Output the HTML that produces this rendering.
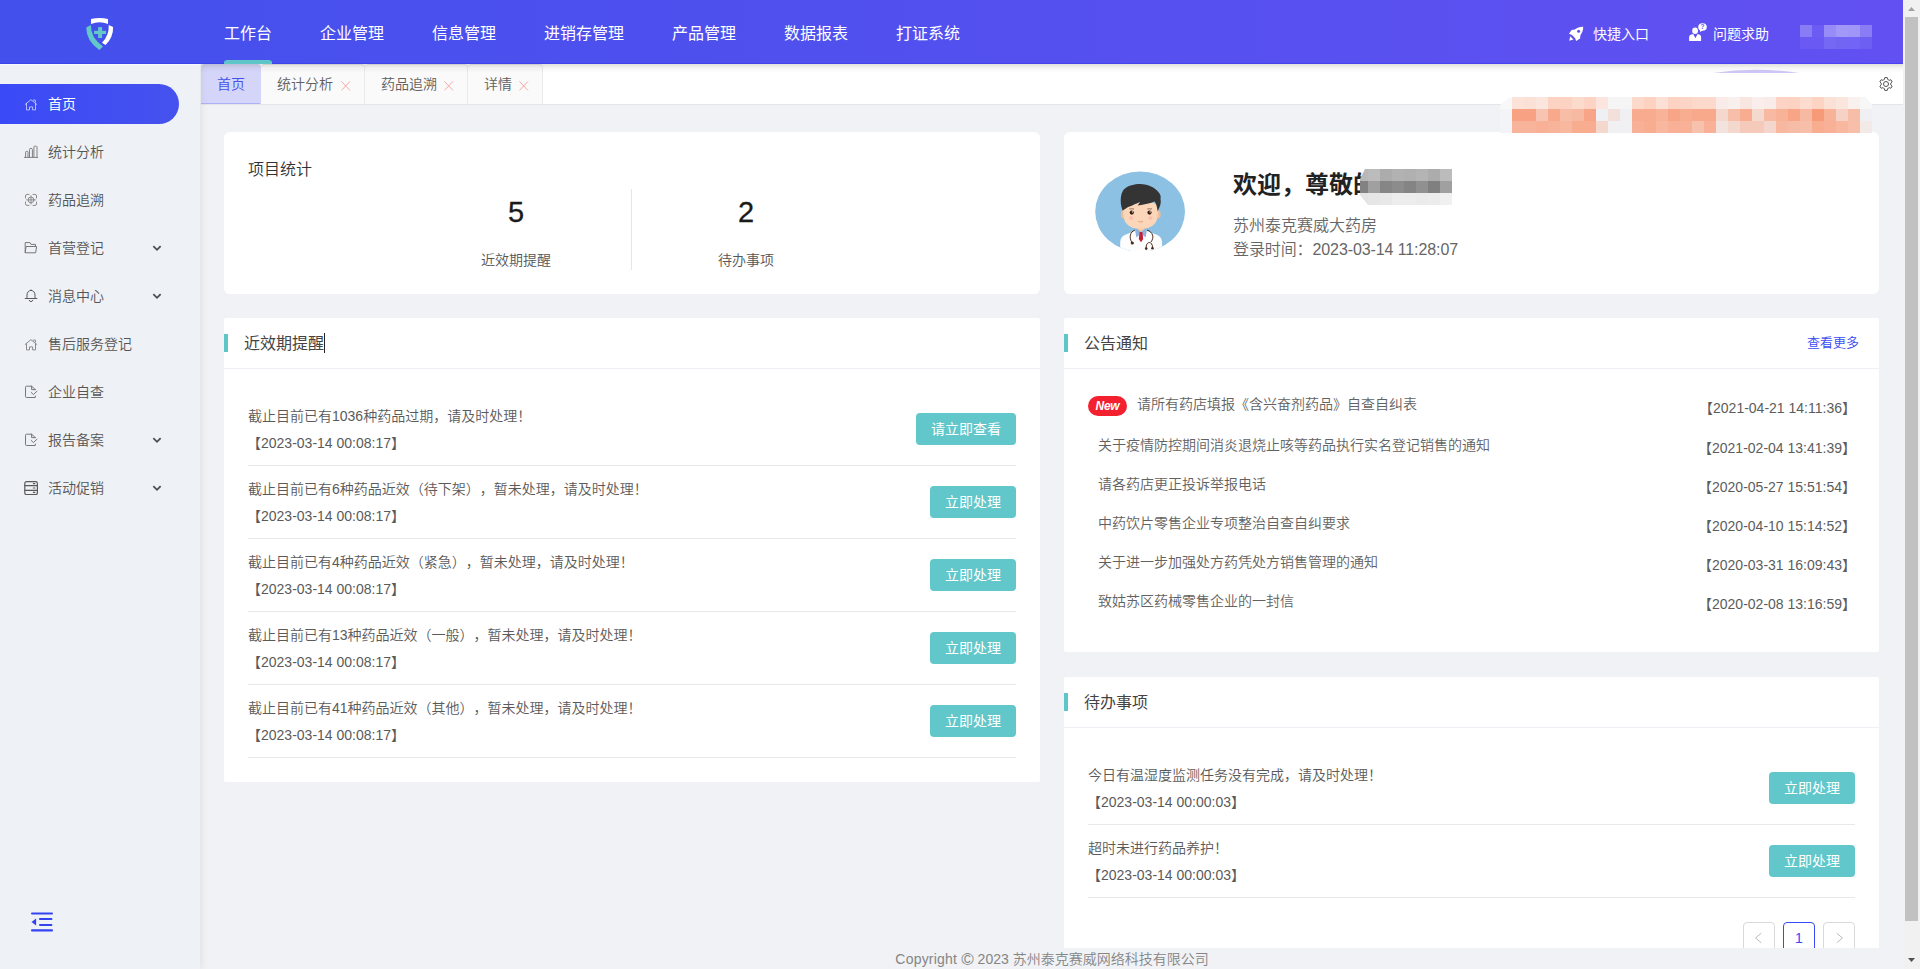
<!DOCTYPE html>
<html lang="zh-CN">
<head>
<meta charset="utf-8">
<title>工作台</title>
<style>
*{box-sizing:border-box;margin:0;padding:0}
html,body{width:1920px;height:969px;overflow:hidden}
body{text-spacing-trim:space-all;font-weight:350;font-family:"Liberation Sans","Noto Sans CJK SC",sans-serif;font-size:14px;color:#555;background:#f0f2f5;position:relative}
.abs{position:absolute}
i.m{position:absolute;width:12px;height:12px;display:block}
/* header */
#hd{position:absolute;left:0;top:0;width:1903px;height:64px;background:linear-gradient(90deg,#4350ec 0%,#4f50ee 40%,#6250f2 100%);box-shadow:inset 0 -1px 0 rgba(56,56,236,.55);z-index:20}
#hd .nav{font-weight:400;position:absolute;top:2px;height:64px;line-height:64px;font-size:16px;color:#fff;white-space:nowrap}
#hd .ul{position:absolute;left:224px;top:60px;width:48px;height:4px;border-radius:3px 3px 0 0;background:#5ec6c8}
#hd .rt{font-weight:400;position:absolute;top:0;height:64px;line-height:69px;font-size:14px;color:#fff;white-space:nowrap}
/* sidebar */
#sb{position:absolute;left:0;top:64px;width:200px;height:905px;background:#eef1f6;box-shadow:2px 0 6px rgba(120,130,150,.13),inset 0 1px 0 #f8f9fb;z-index:10}
#sb .it{position:absolute;left:0;width:200px;height:40px;line-height:40px;font-size:14px;color:#555}
#sb .it span{position:absolute;left:48px;top:0}
#sb .it svg.ic{position:absolute;left:24px;top:13px;width:14px;height:14px}
#sb .it svg.ch{position:absolute;left:151px;top:15px;width:12px;height:12px}
#sb .act{font-weight:400;background:linear-gradient(90deg,#3a4af6,#4652ee);color:#fff;width:179px;border-radius:0 20px 20px 0}
/* tabs */
#tabs{position:absolute;left:201px;top:64px;width:1702px;height:41px;background:#fff;border-bottom:1px solid #e3e5ea;z-index:5}
#tabs:before{content:"";position:absolute;left:0;top:0;right:0;height:9px;background:linear-gradient(rgba(70,70,60,.17),rgba(90,90,90,.06) 45%,rgba(255,255,255,0));z-index:3}
#tabs .tb{position:absolute;top:0;height:40px;line-height:39px;font-size:14px;color:#606060;background:#fafafa;border:1px solid #e9e9ec;border-left:none;border-bottom:none;border-radius:4px 4px 0 0;padding-left:16px;white-space:nowrap}
#tabs .tb svg{position:absolute;top:15.5px;width:10px;height:10px}
/* cards */
.card{position:absolute;background:#fff;border-radius:2px}
#c1,#c2{border-radius:6px}
.ttl{position:absolute;left:0;top:0;right:0;height:51px;border-bottom:1px solid #eef0f5}
.ttl b{position:absolute;left:0;top:16px;width:4px;height:18px;background:#5ec6c8}
.ttl span{position:absolute;left:20px;top:1px;line-height:50px;font-size:16px;color:#444;font-weight:normal}
.row{position:absolute;left:24px;right:24px;height:74px;border-bottom:1px solid #e8e8e8}
.row .t1{position:absolute;left:0;top:13px;line-height:22px;font-size:14px;color:#5a5a5a;white-space:nowrap}
.row .t2{position:absolute;left:-1px;top:40px;line-height:22px;font-size:14px;color:#5a5a5a;white-space:nowrap}
.btn{font-weight:400;position:absolute;right:0;top:21px;height:32px;line-height:32px;border-radius:4px;background:#62c7ca;color:#fff;font-size:14px;text-align:center}
.nt{position:absolute;left:34px;font-size:14px;line-height:20px;color:#626262;white-space:nowrap}
.nd{position:absolute;right:23px;font-size:14px;line-height:20px;color:#5c5c5c;white-space:nowrap}
</style>
</head>
<body>
<!-- HEADER -->
<div id="hd">
  <svg class="abs" style="left:76px;top:8px" width="48" height="48" viewBox="0 0 48 48">
    <path d="M15,16.1 L15,11.1 Q23.5,8.7 32,11.1 L32,16.1 Q23.5,12.4 15,16.1 Z" fill="#fff"/>
    <path d="M10.2,19.6 L14.9,17.1 Q14.5,30 27,38.4 L23.3,41.9 Q10.4,33.4 10.2,19.6 Z" fill="#62c8c8"/>
    <path d="M32.7,17 L37.1,19 Q37.5,29 29.5,37.1 L26,34.7 Q33.5,27 32.7,17 Z" fill="#fff"/>
    <rect x="18.1" y="22.8" width="11.9" height="3.2" fill="#62c8c8"/>
    <rect x="22.1" y="19.1" width="4" height="10.9" fill="#62c8c8"/>
  </svg>
  <svg class="abs" style="left:1564px;top:22px" width="24" height="24" viewBox="0 0 24 24">
    <path d="M19.2,4.8 C16,4.6 13,5.8 10.8,7.6 L7.6,7.9 L5,11.8 L8,13 L11,16 L12.2,19 L16.1,16.4 L16.4,13.2 C18.2,11 19.4,8 19.2,4.8 Z" fill="#fff"/>
    <circle cx="14.6" cy="9.3" r="1.5" fill="#5c52f0"/>
    <path d="M5.2,18.7 L6.3,14.3 L7.9,16.1 L9.5,17.5 Z" fill="#fff"/>
  </svg>
  <svg class="abs" style="left:1684px;top:18px" width="28" height="28" viewBox="0 0 28 28">
    <ellipse cx="11.1" cy="12.7" rx="2.9" ry="3.3" fill="#fff"/>
    <path d="M5.1,23 V19.4 Q5.1,16.6 9.2,16.1 L11.4,20.2 L13.6,16.1 Q17.1,16.6 17.1,19.4 V23 Z" fill="#fff"/>
    <ellipse cx="18.5" cy="9" rx="4.3" ry="3.8" fill="#fff"/>
    <path d="M15.6,11 L16.1,14 L18.6,12.4 Z" fill="#fff"/>
    <text x="18.6" y="11.3" font-family="Liberation Sans, sans-serif" font-size="6.5" font-weight="bold" fill="#5f52f2" text-anchor="middle">?</text>
  </svg>
  <div class="abs" style="left:1800px;top:25px;width:72px;height:24px;overflow:hidden">
    <i class="m" style="left:0;top:0;background:#897df5"></i><i class="m" style="left:12px;top:0;background:#6c5cf3"></i><i class="m" style="left:24px;top:0;background:#978cf7"></i><i class="m" style="left:36px;top:0;background:#a198f8"></i><i class="m" style="left:48px;top:0;background:#a096f8"></i><i class="m" style="left:60px;top:0;background:#897cf5"></i>
    <i class="m" style="left:0;top:12px;background:#6a5af3"></i><i class="m" style="left:12px;top:12px;background:#6a5af3"></i><i class="m" style="left:24px;top:12px;background:#7568f4"></i><i class="m" style="left:36px;top:12px;background:#7365f4"></i><i class="m" style="left:48px;top:12px;background:#7264f4"></i><i class="m" style="left:60px;top:12px;background:#6e5ff3"></i>
  </div>
  <div class="nav" style="left:224px">工作台</div>
  <div class="nav" style="left:320px">企业管理</div>
  <div class="nav" style="left:432px">信息管理</div>
  <div class="nav" style="left:544px">进销存管理</div>
  <div class="nav" style="left:672px">产品管理</div>
  <div class="nav" style="left:784px">数据报表</div>
  <div class="nav" style="left:896px">打证系统</div>
  <div class="ul"></div>
  <div class="rt" style="left:1593px">快捷入口</div>
  <div class="rt" style="left:1713px">问题求助</div>
</div>
<!-- SIDEBAR -->
<div id="sb">
  <div class="it act" style="top:20px"><svg class="ic" viewBox="0 0 14 14" fill="none" stroke="rgba(255,255,255,.62)" stroke-width="1" stroke-linecap="round" stroke-linejoin="round"><path d="M1.2,7.4 L6.95,2.7 L12.8,7.4 M2.5,6.7 V12.9 H5.5 V9.9 H8.6 V12.9 H11.5 V6.7 M9.3,3.1 H11.4 V5.1"/></svg><span>首页</span></div>
  <div class="it" style="top:68px"><svg class="ic" viewBox="0 0 14 14" fill="none" stroke="#808080" stroke-width="1" stroke-linecap="round" stroke-linejoin="round"><path d="M0.2,12.4 H13.9 M1.6,12.4 V7.2 Q1.6,6.3 2.8,6.3 Q4,6.3 4,7.2 V12.4 M5.5,12.4 V4.4 Q5.5,3.4 6.9,3.4 Q8.4,3.4 8.4,4.4 V12.4 M9.9,12.4 V1.8 Q9.9,1.1 11.4,1.1 Q13,1.1 13,1.8 V12.4"/></svg><span>统计分析</span></div>
  <div class="it" style="top:116px"><svg class="ic" viewBox="0 0 14 14" fill="none" stroke="#8a8a8a" stroke-width="1" stroke-linecap="round" stroke-linejoin="round"><path d="M1.5,5 V3 Q1.5,1.4 3.1,1.4 H5 M9,1.4 H10.9 Q12.5,1.4 12.5,3 V5 M12.5,9 V10.8 Q12.5,12.4 10.9,12.4 H9 M5,12.4 H3.1 Q1.5,12.4 1.5,10.8 V9"/><circle cx="7" cy="6.9" r="2.9"/><path d="M7,2.8 V11 M2.6,6.9 H11.4"/></svg><span>药品追溯</span></div>
  <div class="it" style="top:164px"><svg class="ic" viewBox="0 0 14 14" fill="none" stroke="#777" stroke-width="1" stroke-linecap="round" stroke-linejoin="round"><path d="M1.2,11.4 V1.6 H6 L7,3.4 H11.5 V5.4 M1.2,11.4 L2.1,5.5 H12.6 L11.7,11.4 Z"/></svg><span>首营登记</span><svg class="ch" viewBox="0 0 12 12" fill="none" stroke="#4d4d4d" stroke-width="1.8" stroke-linecap="square" stroke-linejoin="miter"><path d="M3,3.8 L6,6.8 L9,3.8"/></svg></div>
  <div class="it" style="top:212px"><svg class="ic" viewBox="0 0 14 14" fill="none" stroke="#5a5a5a" stroke-width="1" stroke-linecap="round" stroke-linejoin="round"><path d="M1.2,9.5 H12.9 M3,9.5 V6 A4,4.6 0 0 1 11,6 V9.5 M7,1.4 V0.9 M5.2,11.3 A1.9,1.9 0 0 0 8.8,11.3"/></svg><span>消息中心</span><svg class="ch" viewBox="0 0 12 12" fill="none" stroke="#4d4d4d" stroke-width="1.8" stroke-linecap="square" stroke-linejoin="miter"><path d="M3,3.8 L6,6.8 L9,3.8"/></svg></div>
  <div class="it" style="top:260px"><svg class="ic" viewBox="0 0 14 14" fill="none" stroke="#8a8a8a" stroke-width="1" stroke-linecap="round" stroke-linejoin="round"><path d="M1.2,7.4 L6.95,2.7 L12.8,7.4 M2.5,6.7 V12.9 H5.5 V9.9 H8.6 V12.9 H11.5 V6.7 M9.3,3.1 H11.4 V5.1"/></svg><span>售后服务登记</span></div>
  <div class="it" style="top:308px"><svg class="ic" viewBox="0 0 14 14" fill="none" stroke="#777" stroke-width="1" stroke-linecap="round" stroke-linejoin="round"><path d="M11.3,11 V12.5 H2.5 Q1.5,12.5 1.5,11.5 V2.2 Q1.5,1.2 2.5,1.2 H7.6 L11.3,4.6 M7.6,1.2 V4.6 H11.3 M7.2,7.5 L9.4,9.5 L12.9,6.3"/></svg><span>企业自查</span></div>
  <div class="it" style="top:356px"><svg class="ic" viewBox="0 0 14 14" fill="none" stroke="#777" stroke-width="1" stroke-linecap="round" stroke-linejoin="round"><path d="M11.3,11 V12.5 H2.5 Q1.5,12.5 1.5,11.5 V2.2 Q1.5,1.2 2.5,1.2 H7.6 L11.3,4.6 M7.6,1.2 V4.6 H11.3 M7.2,7.5 L9.4,9.5 L12.9,6.3"/></svg><span>报告备案</span><svg class="ch" viewBox="0 0 12 12" fill="none" stroke="#4d4d4d" stroke-width="1.8" stroke-linecap="square" stroke-linejoin="miter"><path d="M3,3.8 L6,6.8 L9,3.8"/></svg></div>
  <div class="it" style="top:404px"><svg class="ic" viewBox="0 0 14 14" fill="none" stroke="#5a5a5a" stroke-width="1.2" stroke-linecap="round" stroke-linejoin="round"><rect x="0.8" y="0.6" width="12.6" height="13" rx="1.8"/><path d="M0.9,4.7 H13.3 M0.9,9.3 H13.3 M9.4,2.6 H10.8 M9.4,7 H10.8 M9.4,11.4 H10.8"/></svg><span>活动促销</span><svg class="ch" viewBox="0 0 12 12" fill="none" stroke="#4d4d4d" stroke-width="1.8" stroke-linecap="square" stroke-linejoin="miter"><path d="M3,3.8 L6,6.8 L9,3.8"/></svg></div>
  <svg class="abs" style="left:30px;top:846px" width="24" height="24" viewBox="0 0 24 24" fill="#3343f2"><rect x="1" y="2.4" width="22" height="2.2" rx="1"/><rect x="9" y="8.1" width="13.4" height="2" rx=".8"/><rect x="9" y="13.9" width="13.4" height="2" rx=".8"/><rect x="1" y="19.3" width="22" height="2.3" rx="1"/><path d="M1.5,12 L6.1,8.4 V15.5 Z"/></svg>
</div>
<!-- TABS -->
<div id="tabs">
  <div class="tb" style="left:0;width:60px;background:#d4d5f9;color:#4350ec;border-color:#d4d5f9;box-shadow:inset 0 -1px 0 #adb1f7">首页</div>
  <div class="tb" style="left:60px;width:104px">统计分析<svg viewBox="0 0 10 10" style="left:80px" fill="none" stroke="#f7a6a6" stroke-width="1" stroke-linecap="round"><path d="M0.7,0.7 L8.7,9.1 M8.7,0.7 L0.7,9.1"/></svg></div>
  <div class="tb" style="left:164px;width:103px">药品追溯<svg viewBox="0 0 10 10" style="left:79px" fill="none" stroke="#f7a6a6" stroke-width="1" stroke-linecap="round"><path d="M0.7,0.7 L8.7,9.1 M8.7,0.7 L0.7,9.1"/></svg></div>
  <div class="tb" style="left:267px;width:75px">详情<svg viewBox="0 0 10 10" style="left:51px" fill="none" stroke="#f7a6a6" stroke-width="1" stroke-linecap="round"><path d="M0.7,0.7 L8.7,9.1 M8.7,0.7 L0.7,9.1"/></svg></div>
  <svg class="abs" style="left:1677px;top:12px" width="16" height="16" viewBox="0 0 16 16" fill="none" stroke="#555" stroke-width="1" stroke-linejoin="round"><path d="M9.60,3.37 L9.24,1.62 L6.76,1.62 L6.40,3.37 L4.79,4.30 L3.09,3.74 L1.85,5.88 L3.19,7.07 L3.19,8.93 L1.85,10.12 L3.09,12.26 L4.79,11.70 L6.40,12.63 L6.76,14.38 L9.24,14.38 L9.60,12.63 L11.21,11.70 L12.91,12.26 L14.15,10.12 L12.81,8.93 L12.81,7.07 L14.15,5.88 L12.91,3.74 L11.21,4.30 Z"/><circle cx="8" cy="8" r="2.5"/></svg>
  <svg class="abs" style="left:1510px;top:4px" width="90" height="6" viewBox="0 0 90 6"><path d="M2,5 Q45,-1.5 88,5 Z" fill="#cdc8f7"/></svg>
</div>
<!-- MOSAIC -->
<div class="abs" style="left:1500px;top:97px;width:372px;height:36px;overflow:hidden;z-index:7;clip-path:polygon(10px 0,366px 0,372px 8px,372px 36px,0 36px,0 8px)"><i class="m" style="left:0;top:0;background:#f8f8f9"></i><i class="m" style="left:0;top:12px;background:#f3f4f7"></i><i class="m" style="left:0;top:24px;background:#f3f4f7"></i><i class="m" style="left:12px;top:0px;background:#fbe3da"></i><i class="m" style="left:24px;top:0px;background:#fbe0d6"></i><i class="m" style="left:36px;top:0px;background:#fbe6de"></i><i class="m" style="left:48px;top:0px;background:#fcd2c2"></i><i class="m" style="left:60px;top:0px;background:#fcd2c2"></i><i class="m" style="left:72px;top:0px;background:#fcdacc"></i><i class="m" style="left:84px;top:0px;background:#fdd3c3"></i><i class="m" style="left:96px;top:0px;background:#fbe5de"></i><i class="m" style="left:108px;top:0px;background:#f6f5f6"></i><i class="m" style="left:120px;top:0px;background:#f6f5f6"></i><i class="m" style="left:132px;top:0px;background:#fcd9cb"></i><i class="m" style="left:144px;top:0px;background:#fdd2c1"></i><i class="m" style="left:156px;top:0px;background:#fce0d5"></i><i class="m" style="left:168px;top:0px;background:#fcd3c3"></i><i class="m" style="left:180px;top:0px;background:#fcd5c6"></i><i class="m" style="left:192px;top:0px;background:#fcd9cb"></i><i class="m" style="left:204px;top:0px;background:#fcd9cb"></i><i class="m" style="left:216px;top:0px;background:#f9ece8"></i><i class="m" style="left:228px;top:0px;background:#f9efec"></i><i class="m" style="left:240px;top:0px;background:#fae6e0"></i><i class="m" style="left:252px;top:0px;background:#f9eeeb"></i><i class="m" style="left:264px;top:0px;background:#f9ece8"></i><i class="m" style="left:276px;top:0px;background:#fcd3c4"></i><i class="m" style="left:288px;top:0px;background:#fcd2c2"></i><i class="m" style="left:300px;top:0px;background:#fcdccf"></i><i class="m" style="left:312px;top:0px;background:#fdd3c3"></i><i class="m" style="left:324px;top:0px;background:#fbe0d6"></i><i class="m" style="left:336px;top:0px;background:#fbe6de"></i><i class="m" style="left:348px;top:0px;background:#f9f1ee"></i><i class="m" style="left:360px;top:0px;background:#f7f7f7"></i><i class="m" style="left:12px;top:12px;background:#f8a283"></i><i class="m" style="left:24px;top:12px;background:#f8a283"></i><i class="m" style="left:36px;top:12px;background:#f6c4b1"></i><i class="m" style="left:48px;top:12px;background:#f8a98c"></i><i class="m" style="left:60px;top:12px;background:#f7bda7"></i><i class="m" style="left:72px;top:12px;background:#f7b9a2"></i><i class="m" style="left:84px;top:12px;background:#f8a587"></i><i class="m" style="left:96px;top:12px;background:#eff0f4"></i><i class="m" style="left:108px;top:12px;background:#f3e0da"></i><i class="m" style="left:120px;top:12px;background:#f0f0f3"></i><i class="m" style="left:132px;top:12px;background:#f8ab8f"></i><i class="m" style="left:144px;top:12px;background:#f8ab8f"></i><i class="m" style="left:156px;top:12px;background:#f8b298"></i><i class="m" style="left:168px;top:12px;background:#f8a587"></i><i class="m" style="left:180px;top:12px;background:#f8ad91"></i><i class="m" style="left:192px;top:12px;background:#f8a98c"></i><i class="m" style="left:204px;top:12px;background:#f8a98c"></i><i class="m" style="left:216px;top:12px;background:#f5d8cd"></i><i class="m" style="left:228px;top:12px;background:#f7bea9"></i><i class="m" style="left:240px;top:12px;background:#f8ad91"></i><i class="m" style="left:252px;top:12px;background:#f4d9cf"></i><i class="m" style="left:264px;top:12px;background:#f7b9a2"></i><i class="m" style="left:276px;top:12px;background:#f8b298"></i><i class="m" style="left:288px;top:12px;background:#f8a587"></i><i class="m" style="left:300px;top:12px;background:#f7b9a2"></i><i class="m" style="left:312px;top:12px;background:#f79a78"></i><i class="m" style="left:324px;top:12px;background:#f8b298"></i><i class="m" style="left:336px;top:12px;background:#f5d2c5"></i><i class="m" style="left:348px;top:12px;background:#f7bda7"></i><i class="m" style="left:360px;top:12px;background:#f0f0f4"></i><i class="m" style="left:12px;top:24px;background:#f8b49b"></i><i class="m" style="left:24px;top:24px;background:#f8b49b"></i><i class="m" style="left:36px;top:24px;background:#f8b097"></i><i class="m" style="left:48px;top:24px;background:#f8b49b"></i><i class="m" style="left:60px;top:24px;background:#f8b8a0"></i><i class="m" style="left:72px;top:24px;background:#f8ac90"></i><i class="m" style="left:84px;top:24px;background:#f8ad91"></i><i class="m" style="left:96px;top:24px;background:#f5d8cd"></i><i class="m" style="left:108px;top:24px;background:#f1f1f4"></i><i class="m" style="left:120px;top:24px;background:#f1f1f4"></i><i class="m" style="left:132px;top:24px;background:#f8b097"></i><i class="m" style="left:144px;top:24px;background:#f8ad91"></i><i class="m" style="left:156px;top:24px;background:#f8b8a0"></i><i class="m" style="left:168px;top:24px;background:#f8b097"></i><i class="m" style="left:180px;top:24px;background:#f8b097"></i><i class="m" style="left:192px;top:24px;background:#f7c2ad"></i><i class="m" style="left:204px;top:24px;background:#f8b097"></i><i class="m" style="left:216px;top:24px;background:#f3e3de"></i><i class="m" style="left:228px;top:24px;background:#f5d8cd"></i><i class="m" style="left:240px;top:24px;background:#f6cabb"></i><i class="m" style="left:252px;top:24px;background:#f6cabb"></i><i class="m" style="left:264px;top:24px;background:#f4d6cc"></i><i class="m" style="left:276px;top:24px;background:#f8b8a0"></i><i class="m" style="left:288px;top:24px;background:#f7bca7"></i><i class="m" style="left:300px;top:24px;background:#f7bea9"></i><i class="m" style="left:312px;top:24px;background:#f8ad91"></i><i class="m" style="left:324px;top:24px;background:#f8b097"></i><i class="m" style="left:336px;top:24px;background:#f8b8a0"></i><i class="m" style="left:348px;top:24px;background:#f7bea9"></i><i class="m" style="left:360px;top:24px;background:#f3eae8"></i></div>
<!-- CARD 1 -->
<div class="card" id="c1" style="left:224px;top:132px;width:816px;height:162px">
  <div class="abs" style="left:24px;top:26px;font-size:16px;line-height:24px;color:#333">项目统计</div>
  <div class="abs" style="left:177px;top:57px;width:231px;height:81px;border-right:1px solid #e6e6ea"></div>
  <div class="abs" style="left:177px;top:60px;width:230px;text-align:center;font-size:29px;line-height:40px;color:#1a1a1a;-webkit-text-stroke:.3px #1a1a1a">5</div>
  <div class="abs" style="left:177px;top:117px;width:230px;text-align:center;font-size:14px;line-height:22px;color:#555">近效期提醒</div>
  <div class="abs" style="left:407px;top:60px;width:230px;text-align:center;font-size:29px;line-height:40px;color:#1a1a1a;-webkit-text-stroke:.3px #1a1a1a">2</div>
  <div class="abs" style="left:407px;top:117px;width:230px;text-align:center;font-size:14px;line-height:22px;color:#555">待办事项</div>
</div>
<!-- CARD 2 -->
<div class="card" id="c2" style="left:1064px;top:132px;width:815px;height:162px">
  <svg class="abs" style="left:31px;top:39.4px" width="90" height="80" viewBox="0 0 90 80">
    <defs><clipPath id="avc"><ellipse cx="45.1" cy="40.6" rx="44.9" ry="40.2"/></clipPath></defs>
    <g clip-path="url(#avc)">
    <rect x="0" y="0" width="90" height="82" fill="#8dc1e3"/>
    <path d="M25.2,80 V71 Q25.5,64.5 33,62.8 L41,59.6 H51 L59,62.8 Q66.8,64.5 67.1,71 V80 Z" fill="#fdfdfd"/>
    <rect x="42.3" y="54" width="7.2" height="8" fill="#f7c9a4"/>
    <path d="M40.1,59.4 L42.3,58 L46,61 L49.6,58 L51.9,59.4 L50.6,66.5 L46,62.5 L41.4,66.5 Z" fill="#8fb1dc"/>
    <path d="M44.6,61 H47.4 L48.2,68 L46,71.2 L43.8,68 Z" fill="#c2203a"/>
    <path d="M39.9,59 C35,61 34,66 36.6,71" fill="none" stroke="#4a2a1c" stroke-width="1"/>
    <circle cx="37.3" cy="72" r="1.6" fill="#4a2a1c"/>
    <path d="M52,59 C58,61 59.5,66.5 56,71 M51.2,77.6 C50.5,69.5 58,69.5 57.5,77.2" fill="none" stroke="#4a2a1c" stroke-width="1"/>
    <circle cx="51.2" cy="77.6" r="1.3" fill="#4a2a1c"/><circle cx="57.5" cy="77.2" r="1.3" fill="#4a2a1c"/>
    <ellipse cx="27.9" cy="43.4" rx="2" ry="3.9" fill="#f2bd96"/><ellipse cx="63.6" cy="43.4" rx="2" ry="3.9" fill="#f2bd96"/>
    <path d="M28.4,38 Q28,30 45.6,30 Q63.2,30 62.8,38 V44 Q62,57.8 45.6,57.8 Q29.2,57.8 28.4,44 Z" fill="#fbd6b8"/>
    <path d="M27.6,39.5 C24,30 26,20 30,17.5 C36,12 50,11.5 56,15.5 C62,18 67,24 65.5,27.5 C66.5,32 65,36 62.6,40.2 C62,35 61,32 59.5,30.5 C55,32.5 47,34 42.5,34.5 C44,33 44.6,32 44.8,31 C40,33.5 34,35.5 31.2,37.2 C29.6,38 29,39 27.6,39.5 Z" fill="#343434"/>
    <circle cx="36.8" cy="41.6" r="2.1" fill="#3a1d10"/><circle cx="54.5" cy="41.6" r="2.1" fill="#3a1d10"/>
    <circle cx="37.5" cy="40.9" r=".7" fill="#fff"/><circle cx="55.2" cy="40.9" r=".7" fill="#fff"/>
    <path d="M34.3,37.9 H39 M52.3,37.9 H57" stroke="#6b4a38" stroke-width=".7" fill="none"/>
    <circle cx="36.2" cy="47" r="2.1" fill="#f8b6ac" opacity=".7"/><circle cx="55.4" cy="47" r="2.1" fill="#f8b6ac" opacity=".7"/>
    <path d="M43.2,50.3 Q45.6,52 48,50.3" stroke="#d98a6a" stroke-width=".7" fill="none"/>
    </g>
  </svg>
  <div class="abs" style="left:169px;top:35px;font-size:24px;line-height:36px;font-weight:bold;color:#222;white-space:nowrap">欢迎，尊敬的</div>
  <div class="abs" style="left:292px;top:37px;width:96px;height:36px;overflow:hidden;clip-path:polygon(9px 0,96px 0,96px 36px,12px 36px,4px 26px,4px 10px)"><i class="m" style="left:0px;top:0px;background:#b8b8b8"></i><i class="m" style="left:12px;top:0px;background:#bcbcbc"></i><i class="m" style="left:24px;top:0px;background:#acacac"></i><i class="m" style="left:36px;top:0px;background:#b2b2b2"></i><i class="m" style="left:48px;top:0px;background:#b0b0b0"></i><i class="m" style="left:60px;top:0px;background:#b4b4b4"></i><i class="m" style="left:72px;top:0px;background:#acacac"></i><i class="m" style="left:84px;top:0px;background:#bcbcbc"></i><i class="m" style="left:0px;top:12px;background:#828282"></i><i class="m" style="left:12px;top:12px;background:#a0a0a0"></i><i class="m" style="left:24px;top:12px;background:#868686"></i><i class="m" style="left:36px;top:12px;background:#8c8c8c"></i><i class="m" style="left:48px;top:12px;background:#848484"></i><i class="m" style="left:60px;top:12px;background:#909090"></i><i class="m" style="left:72px;top:12px;background:#808080"></i><i class="m" style="left:84px;top:12px;background:#a0a0a0"></i><i class="m" style="left:0px;top:24px;background:#e4e4e4"></i><i class="m" style="left:12px;top:24px;background:#e6e6e6"></i><i class="m" style="left:24px;top:24px;background:#e8e8e8"></i><i class="m" style="left:36px;top:24px;background:#ededed"></i><i class="m" style="left:48px;top:24px;background:#ededed"></i><i class="m" style="left:60px;top:24px;background:#ebebeb"></i><i class="m" style="left:72px;top:24px;background:#ececec"></i><i class="m" style="left:84px;top:24px;background:#f0f0f0"></i></div>
  <div class="abs" style="left:169px;top:82px;font-size:16px;line-height:24px;color:#666;white-space:nowrap">苏州泰克赛威大药房</div>
  <div class="abs" style="left:169px;top:106px;font-size:16px;line-height:24px;color:#666;white-space:nowrap;letter-spacing:-.1px">登录时间：2023-03-14 11:28:07</div>
</div>
<!-- CARD 3 -->
<div class="card" id="c3" style="left:224px;top:318px;width:816px;height:464px">
  <div class="ttl"><b></b><span>近效期提醒</span><u style="position:absolute;left:100px;top:15px;width:1px;height:20px;background:#222"></u></div>
  <div class="row" style="top:74px"><div class="t1">截止目前已有1036种药品过期，请及时处理！</div><div class="t2">【2023-03-14 00:08:17】</div><div class="btn" style="width:100px">请立即查看</div></div>
  <div class="row" style="top:147px"><div class="t1">截止目前已有6种药品近效（待下架），暂未处理，请及时处理！</div><div class="t2">【2023-03-14 00:08:17】</div><div class="btn" style="width:86px">立即处理</div></div>
  <div class="row" style="top:220px"><div class="t1">截止目前已有4种药品近效（紧急），暂未处理，请及时处理！</div><div class="t2">【2023-03-14 00:08:17】</div><div class="btn" style="width:86px">立即处理</div></div>
  <div class="row" style="top:293px"><div class="t1">截止目前已有13种药品近效（一般），暂未处理，请及时处理！</div><div class="t2">【2023-03-14 00:08:17】</div><div class="btn" style="width:86px">立即处理</div></div>
  <div class="row" style="top:366px"><div class="t1">截止目前已有41种药品近效（其他），暂未处理，请及时处理！</div><div class="t2">【2023-03-14 00:08:17】</div><div class="btn" style="width:86px">立即处理</div></div>
</div>
<!-- CARD 4 -->
<div class="card" id="c4" style="left:1064px;top:318px;width:815px;height:334px">
  <div class="ttl"><b></b><span>公告通知</span></div>
  <div class="abs" style="right:20px;top:14px;font-size:13px;line-height:22px;color:#3a4af0">查看更多</div>
  <div class="abs" style="left:24px;top:78px;width:39px;height:20px;border-radius:10px;background:#f3212f;color:#fff;font-size:12px;font-weight:bold;font-style:italic;line-height:21.5px;text-align:center;letter-spacing:-.3px">New</div>
  <div class="nt" style="left:73px;top:76px">请所有药店填报《含兴奋剂药品》自查自纠表</div><div class="nd" style="top:80px">【2021-04-21 14:11:36】</div>
  <div class="nt" style="top:117px">关于疫情防控期间消炎退烧止咳等药品执行实名登记销售的通知</div><div class="nd" style="top:120px">【2021-02-04 13:41:39】</div>
  <div class="nt" style="top:156px">请各药店更正投诉举报电话</div><div class="nd" style="top:159px">【2020-05-27 15:51:54】</div>
  <div class="nt" style="top:195px">中药饮片零售企业专项整治自查自纠要求</div><div class="nd" style="top:198px">【2020-04-10 15:14:52】</div>
  <div class="nt" style="top:234px">关于进一步加强处方药凭处方销售管理的通知</div><div class="nd" style="top:237px">【2020-03-31 16:09:43】</div>
  <div class="nt" style="top:273px">致姑苏区药械零售企业的一封信</div><div class="nd" style="top:276px">【2020-02-08 13:16:59】</div>
</div>
<!-- CARD 5 -->
<div class="card" id="c5" style="left:1064px;top:677px;width:815px;height:292px;border-radius:2px 2px 0 0">
  <div class="ttl"><b></b><span>待办事项</span></div>
  <div class="row" style="top:74px"><div class="t1">今日有温湿度监测任务没有完成，请及时处理！</div><div class="t2">【2023-03-14 00:00:03】</div><div class="btn" style="width:86px">立即处理</div></div>
  <div class="row" style="top:147px"><div class="t1">超时未进行药品养护！</div><div class="t2">【2023-03-14 00:00:03】</div><div class="btn" style="width:86px">立即处理</div></div>
  <div class="abs" style="left:679px;top:245px;width:32px;height:32px;border:1px solid #d9d9d9;border-radius:4px"><svg class="abs" style="left:9px;top:9px" width="12" height="12" viewBox="0 0 12 12" fill="none" stroke="#bbb" stroke-width="1"><path d="M8.2,1.2 L2.6,6 L8.2,10.8"/></svg></div>
  <div class="abs" style="left:719px;top:245px;width:32px;height:32px;border:1px solid #3a48f5;border-radius:4px;text-align:center;line-height:31px;font-size:14px;color:#3a48f5">1</div>
  <div class="abs" style="left:759px;top:245px;width:32px;height:32px;border:1px solid #d9d9d9;border-radius:4px"><svg class="abs" style="left:9px;top:9px" width="12" height="12" viewBox="0 0 12 12" fill="none" stroke="#bbb" stroke-width="1"><path d="M3.8,1.2 L9.4,6 L3.8,10.8"/></svg></div>
</div>
<!-- /C5 -->
<!-- FOOTER -->
<div id="ft" class="abs" style="left:201px;top:948px;width:1702px;height:21px;background:#f0f2f5;z-index:6;text-align:center;font-size:14px;line-height:22px;color:#858585"><span style="letter-spacing:.2px">Copyright </span><span style="font-size:17px;line-height:0;position:relative;top:1px">©</span> 2023 苏州泰克赛威网络科技有限公司</div>
<!-- SCROLLBAR -->
<div id="scr" class="abs" style="left:1903px;top:0;width:17px;height:969px;background:#f1f1f1;z-index:30">
  <div class="abs" style="left:2px;top:17px;width:13px;height:904px;background:#c1c1c1"></div>
  <svg class="abs" style="left:0;top:0" width="17" height="17" viewBox="0 0 17 17"><path d="M5,11 L8.5,7 L12,11 Z" fill="#a3a3a3"/></svg>
  <svg class="abs" style="left:0;top:952px" width="17" height="17" viewBox="0 0 17 17"><path d="M5,6 L8.5,10 L12,6 Z" fill="#505050"/></svg>
</div>
</body>
</html>
